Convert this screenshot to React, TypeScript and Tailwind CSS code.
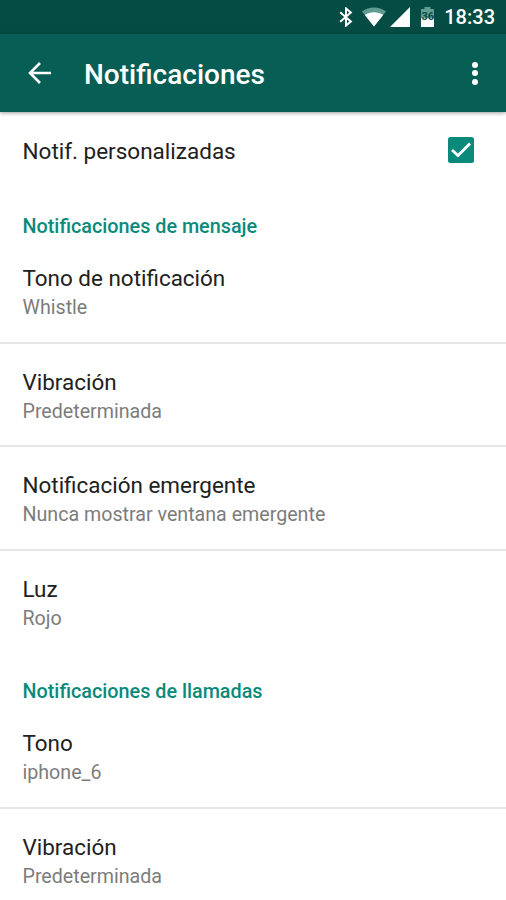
import { ReactNode } from "react";

type itemType = { title: string; value: string };

const messageItems: itemType[] = [
  { title: "Tono de notificación", value: "Whistle" },
  { title: "Vibración", value: "Predeterminada" },
  { title: "Notificación emergente", value: "Nunca mostrar ventana emergente" },
  { title: "Luz", value: "Rojo" },
];

const callItems: itemType[] = [
  { title: "Tono", value: "iphone_6" },
  { title: "Vibración", value: "Predeterminada" },
];

const StatusBar = () => {
  return (
    <div className="flex h-[34px] items-center justify-end bg-[#054d44] pr-[11px] text-white">
      <svg width="14" height="20" viewBox="0 0 14 20" fill="none" stroke="currentColor" strokeWidth="2" className="mr-[9px]">
        <path d="M1.2 5.2 11.8 14.6 7 18.6V1.4L11.8 5.4 1.2 14.8" />
      </svg>
      <svg width="24" height="20" viewBox="0 0 24 20" className="mr-[4px]">
        <path d="M0 4.5C7 -0.8 17 -0.8 24 4.5L12 19.5Z" fill="#5f9c92" />
        <path d="M2.8 8C8 4.2 16 4.2 21.2 8L12 19.5Z" fill="#fff" />
      </svg>
      <svg width="20" height="20" viewBox="0 0 20 20" className="mr-[11px]">
        <path d="M20 0V20H0Z" fill="#fff" />
      </svg>
      <div className="relative mr-[10px] h-5 w-[13px]">
        <svg width="13" height="20" viewBox="0 0 13 20">
          <path d="M3.5 0H9.5V2H13V12H0V2H3.5Z" fill="#5f9c92" />
          <path d="M0 11H13V20H0Z" fill="#fff" />
        </svg>
        <span className="absolute inset-x-0 top-[4px] text-center text-[11px] leading-[12px] font-bold text-[#054d44]">36</span>
      </div>
      <span className="text-[20px] leading-6 font-medium">18:33</span>
    </div>
  );
};

const Toolbar = () => {
  return (
    <header className="flex h-[78px] items-center bg-[#075e54] pr-[28px] pl-[28px] text-white shadow-[0_1px_4px_rgba(0,0,0,0.4)]">
      <svg width="24" height="22" viewBox="0 0 24 22" fill="none" stroke="currentColor" strokeWidth="2.6">
        <path d="M23 11H2M12 1 2 11 12 21" />
      </svg>
      <h1 className="mt-[3px] ml-[32px] flex-1 text-[28px] leading-8 font-medium">Notificaciones</h1>
      <div className="flex flex-col gap-[2.5px]">
        <i className="size-[6px] rounded-full bg-white" />
        <i className="size-[6px] rounded-full bg-white" />
        <i className="size-[6px] rounded-full bg-white" />
      </div>
    </header>
  );
};

const SectionTitle = ({ children }: { children: ReactNode }) => {
  return <h2 className="h-[51px] px-[22.5px] pt-[26px] text-[19.8px] leading-6 font-medium text-[#0b8a7c]">{children}</h2>;
};

const Item = ({ item }: { item: itemType }) => {
  return (
    <div className="h-[103.5px] border-b-2 border-[#e6e6e6] px-[22.5px] pt-[23px] last:border-b-0">
      <p className="text-[22.45px] leading-[30px] text-[#212121]">{item.title}</p>
      <p className="text-[19.65px] leading-[29px] text-[#7c7c7c]">{item.value}</p>
    </div>
  );
};

const App = () => {
  return (
    <div className="h-[900px] w-[506px] overflow-hidden bg-white font-['Roboto',sans-serif]">
      <StatusBar />
      <Toolbar />

      <div className="flex h-[77px] items-center justify-between pr-[32px] pl-[22.5px]">
        <p className="mt-[2px] text-[22.5px] text-[#212121]">Notif. personalizadas</p>
        <svg width="26" height="26" viewBox="0 0 26 26" className="-mt-[2px]">
          <rect width="26" height="26" rx="2.5" fill="#0b8a7c" />
          <path d="M4 13 10 18.5 22 6.5" fill="none" stroke="#fff" strokeWidth="2.8" />
        </svg>
      </div>

      <SectionTitle>Notificaciones de mensaje</SectionTitle>
      <div>
        {messageItems.map((item) => <Item key={item.title} item={item} />)}
      </div>

      <SectionTitle>Notificaciones de llamadas</SectionTitle>
      <div>
        {callItems.map((item) => <Item key={item.title} item={item} />)}
      </div>
    </div>
  );
};

export default App;
